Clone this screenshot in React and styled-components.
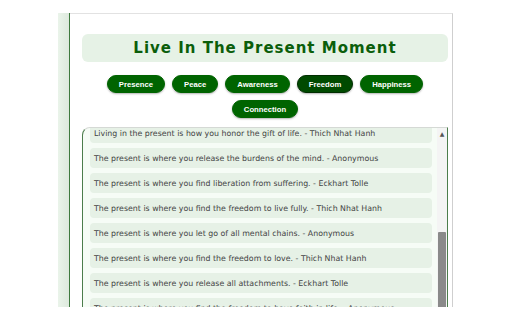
import { useLayoutEffect, useRef, useState } from "react";
import styled, { createGlobalStyle } from "styled-components";

const GlobalStyle = createGlobalStyle`
  html, body {
    margin: 0;
    padding: 0;
    background: #ffffff;
    overflow: hidden;
  }
`;

const Frame = styled.div`
  display: flex;
  width: 395px;
  height: 294px;
  margin: 13px 0 0 58px;
  overflow: hidden;
`;

const SideStrip = styled.div`
  width: 11px;
  flex-shrink: 0;
  background: linear-gradient(to right, #eaf4ea, #dde9dd);
  border-right: 1px solid #3f7a3f;
`;

const Panel = styled.div`
  flex: 1;
  display: flex;
  flex-direction: column;
  padding: 20px 4px 0 12px;
  background: #ffffff;
  border-top: 1px solid #e2e2e2;
  border-right: 1px solid #cfcfcf;
  & > * {
    flex-shrink: 0;
  }
`;

const Title = styled.h1`
  margin: 0;
  height: 28px;
  display: flex;
  align-items: center;
  justify-content: center;
  background: #e6f2e6;
  border-radius: 6px;
  color: #0b5e0b;
  font-family: "DejaVu Sans", Verdana, sans-serif;
  font-size: 15px;
  font-weight: bold;
  letter-spacing: 1px;
`;

const Topics = styled.div`
  display: flex;
  flex-wrap: wrap;
  justify-content: center;
  gap: 7px;
  margin: 13px 20px 9px;
`;

const TopicButton = styled.button`
  height: 18px;
  padding: 0 11px;
  border: 1px solid ${(p) => (p.$active ? "#002e00" : "#006400")};
  border-radius: 9px;
  background: ${(p) => (p.$active ? "#004a00" : "#006400")};
  color: #ffffff;
  font-family: "Liberation Sans", Arial, sans-serif;
  font-size: 7.7px;
  font-weight: bold;
  box-shadow: 0 1px 2px rgba(0, 0, 0, 0.3);
  cursor: pointer;
`;

const ListBox = styled.div`
  display: flex;
  height: 220px;
  background: #f6fcf6;
  border: 1px solid #4c7d4c;
  border-top-color: #d5d9d5;
  border-radius: 8px 0 0 0;
  overflow: hidden;
`;

const QuoteList = styled.div`
  flex: 1;
  overflow: hidden;
  padding: 7px 5px 7px 7px;
  display: flex;
  flex-direction: column;
  gap: 5px;
`;

const Quote = styled.div`
  flex-shrink: 0;
  height: 20px;
  display: flex;
  align-items: center;
  padding: 0 4px;
  background: #e6f1e6;
  border-radius: 4px;
  color: #444444;
  font-family: "DejaVu Sans", Verdana, sans-serif;
  font-size: 7.85px;
  white-space: nowrap;
  overflow: hidden;
`;

const ScrollTrack = styled.div`
  position: relative;
  width: 10px;
  flex-shrink: 0;
  background: #f4f4f4;
`;

const ScrollArrow = styled.div`
  height: 10px;
  display: flex;
  align-items: center;
  justify-content: center;
  color: #555;
  font-size: 6px;
  font-family: "DejaVu Sans", sans-serif;
`;

const ScrollThumb = styled.div`
  position: absolute;
  left: 1px;
  right: 1px;
  background: #8a8a8a;
  border-radius: 1px;
`;

const topics = ["Presence", "Peace", "Awareness", "Freedom", "Happiness", "Connection"];

const quotes = [
  "Freedom is found in the present moment. - Anonymous",
  "The present moment is the only place where freedom exists. - Eckhart Tolle",
  "Be free where you are. - Thich Nhat Hanh",
  "In the present, you are free from the weight of the past. - Anonymous",
  "The present is where you are free to choose. - Eckhart Tolle",
  "Let go of the past and be free in the now. - Anonymous",
  "Freedom lives in this breath, in this moment. - Thich Nhat Hanh",
  "The now is free of fear and regret. - Eckhart Tolle",
  "True freedom is being present with what is. - Anonymous",
  "Living in the present is how you honor the gift of life. - Thich Nhat Hanh",
  "The present is where you release the burdens of the mind. - Anonymous",
  "The present is where you find liberation from suffering. - Eckhart Tolle",
  "The present is where you find the freedom to live fully. - Thich Nhat Hanh",
  "The present is where you let go of all mental chains. - Anonymous",
  "The present is where you find the freedom to love. - Thich Nhat Hanh",
  "The present is where you release all attachments. - Eckhart Tolle",
  "The present is where you find the freedom to have faith in life. - Anonymous",
  "The present moment is always free. - Eckhart Tolle",
  "In the now, nothing can bind you. - Anonymous",
  "Freedom begins with a single mindful breath. - Thich Nhat Hanh",
];

export default function App() {
  const [active, setActive] = useState("Freedom");
  const listRef = useRef(null);
  const [thumb, setThumb] = useState({ top: 0, height: 0 });

  useLayoutEffect(() => {
    const el = listRef.current;
    if (!el) return;
    el.scrollTop = 237;
    const track = el.clientHeight - 10;
    const ratio = el.clientHeight / el.scrollHeight;
    setThumb({
      top: 6 + (el.scrollTop / el.scrollHeight) * track,
      height: ratio * track,
    });
  }, []);

  return (
    <>
      <GlobalStyle />
      <Frame>
        <SideStrip />
        <Panel>
          <Title>Live In The Present Moment</Title>
          <Topics>
            {topics.map((t) => (
              <TopicButton key={t} $active={t === active} onClick={() => setActive(t)}>
                {t}
              </TopicButton>
            ))}
          </Topics>
          <ListBox>
            <QuoteList ref={listRef}>
              {quotes.map((q, i) => (
                <Quote key={i}>{q}</Quote>
              ))}
            </QuoteList>
            <ScrollTrack>
              <ScrollArrow>▲</ScrollArrow>
              <ScrollThumb style={{ top: thumb.top, height: thumb.height }} />
            </ScrollTrack>
          </ListBox>
        </Panel>
      </Frame>
    </>
  );
}
